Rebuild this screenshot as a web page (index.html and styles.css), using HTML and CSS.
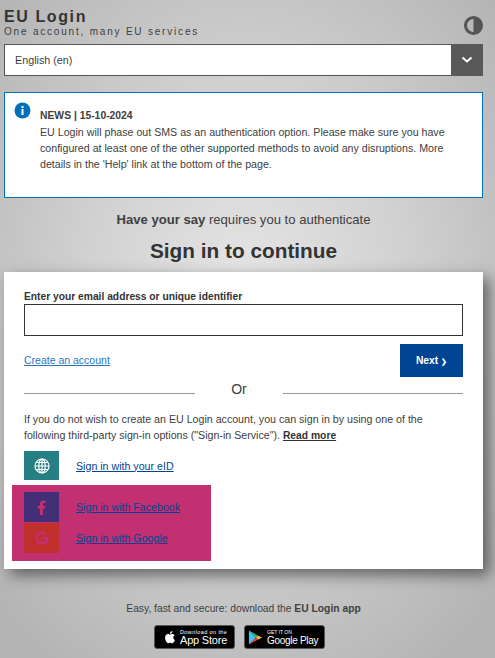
FILE: index.html
```html
<!DOCTYPE html>
<html lang="en">
<head>
  <meta charset="UTF-8" />
  <meta name="viewport" content="width=device-width, initial-scale=1.0"/>
  <title>EU Login</title>
  <link rel="stylesheet" href="styles.css">
</head>
<body>

  <div class="header">
    <div class="brand">
      <div class="brand-name">EU Login</div>
      <div class="brand-sub">One account, many EU services</div>
    </div>
    <svg class="contrast" width="19" height="19" viewBox="0 0 19 19">
      <circle cx="9.500" cy="9.500" r="8" fill="none" stroke="#555" stroke-width="3"/>
      <path d="M9.500 1.500a8 8 0 0 1 0 16z" fill="#555"/>
    </svg>
  </div>

  <div class="lang">
    <div class="lang-value">English (en)</div>
    <div class="lang-arrow">
      <svg width="12" height="8" viewBox="0 0 12 8">
        <path d="M1.500 1.500 6 5.500l4.500-4" fill="none" stroke="#fff" stroke-width="2"/>
      </svg>
    </div>
  </div>

  <div class="news">
    <svg class="news-icon" width="17" height="17" viewBox="0 0 17 17">
      <circle cx="8.500" cy="8.500" r="8" fill="#0070b8"/>
      <rect x="7.500" y="4" width="2" height="2" fill="#fff"/>
      <rect x="7.500" y="7" width="2" height="6" fill="#fff"/>
    </svg>
    <div class="news-text">
      <div class="news-title">NEWS | 15-10-2024</div>
      <div>EU Login will phase out SMS as an authentication option. Please make sure you have configured at least one of the other supported methods to avoid any disruptions. More details in the 'Help' link at the bottom of the page.</div>
    </div>
  </div>

  <div class="auth-note"><b>Have your say</b> requires you to authenticate</div>
  <h1 class="title">Sign in to continue</h1>

  <div class="card">
    <label class="field-label" for="email">Enter your email address or unique identifier</label>
    <input class="field" id="email" type="text">

    <div class="actions">
      <a class="create-link" href="#">Create an account</a>
      <button class="next">Next <span class="next-arrow">&#x276F;</span></button>
    </div>

    <div class="or"><span class="or-line or-left"></span><span class="or-text">Or</span><span class="or-line"></span></div>

    <p class="intro">If you do not wish to create an EU Login account, you can sign in by using one of the following third-party sign-in options ("Sign-in Service"). <a class="read-more" href="#">Read more</a></p>

    <div class="service service-eid">
      <span class="service-icon icon-eid">
        <svg width="16" height="16" viewBox="0 0 16 16" fill="none" stroke="#fff" stroke-width="1.200">
          <circle cx="8" cy="8" r="7"/>
          <ellipse cx="8" cy="8" rx="3.200" ry="7"/>
          <path d="M8 1v14M1 8h14M2 4.500h12M2 11.500h12"/>
        </svg>
      </span>
      <a class="service-link" href="#">Sign in with your eID</a>
    </div>

    <div class="highlight">
      <div class="service">
        <span class="service-icon icon-fb">
          <svg width="9" height="15" viewBox="0 0 9 15">
            <path d="M3 15V8.500H.8V6H3V4.200C3 1.700 4.400.5 6.500.5c.9 0 1.700.1 2 .1v2.300H7.200C6.100 2.900 5.900 3.400 5.900 4.200V6h2.500l-.4 2.500H5.900V15z" fill="#c23071"/>
          </svg>
        </span>
        <a class="service-link" href="#">Sign in with Facebook</a>
      </div>
      <div class="service">
        <span class="service-icon icon-google">
          <svg width="14" height="14" viewBox="0 0 14 14">
            <path d="M7 5.700h6.700c.1.400.1.800.1 1.300 0 4-2.700 6.800-6.800 6.800A6.800 6.800 0 1 1 7 .2c1.800 0 3.400.7 4.600 1.800L9.700 3.800C9 3.200 8.100 2.800 7 2.800 4.700 2.800 2.900 4.700 2.900 7s1.800 4.200 4.100 4.200c2 0 3.400-1.100 3.800-3H7z" fill="#c23071"/>
          </svg>
        </span>
        <a class="service-link" href="#">Sign in with Google</a>
      </div>
    </div>
  </div>

  <div class="footer">
    <div class="footer-text">Easy, fast and secure: download the <b>EU Login app</b></div>
    <div class="badges">
      <a class="badge" href="#">
        <svg width="14" height="16" viewBox="0 0 14 16">
          <path d="M11.300 8.500c0-1.500 1.200-2.200 1.300-2.300-.7-1-1.800-1.200-2.200-1.200-.9-.1-1.800.6-2.300.6s-1.200-.6-2-.5c-1 0-2 .6-2.500 1.500C2.500 8.500 3.300 11.300 4.300 12.800c.5.700 1.100 1.500 1.900 1.500s1-.5 2-.5 1.200.5 2 .5 1.400-.7 1.900-1.500c.6-.9.800-1.700.9-1.700-.1 0-1.700-.7-1.700-2.600zM9.800 3.900c.4-.5.700-1.200.6-1.900-.6 0-1.300.4-1.800.9-.4.500-.7 1.200-.6 1.800.7.100 1.400-.3 1.800-.8z" fill="#fff"/>
        </svg>
        <span class="badge-text"><span class="badge-small">Download on the</span><span class="badge-big">App Store</span></span>
      </a>
      <a class="badge badge-google" href="#">
        <svg width="15" height="17" viewBox="0 0 16 17">
          <path d="M1 1v15l7.500-7.500z" fill="#3bc4f0"/>
          <path d="M1 1l10 5.500-2.500 2z" fill="#35b36b"/>
          <path d="M1 16l10-5.500-2.500-2z" fill="#e8423f"/>
          <path d="M11 6.500l4 2-4 2-2.500-2z" fill="#fbc02d"/>
        </svg>
        <span class="badge-text"><span class="badge-small badge-caps">GET IT ON</span><span class="badge-big badge-play">Google Play</span></span>
      </a>
    </div>
  </div>

</body>
</html>
```

FILE: styles.css
```css
html {
  background-color: #b8b8b8;
}

body {
  margin: 0;
  height: 658px;
  overflow: hidden;
  box-sizing: border-box;
  padding: 7px 12px 0 4px;
  color: #404040;
  font-family: "Liberation Sans", Arial, sans-serif;
  font-size: 10.650px;
  background: radial-gradient(ellipse 340px 440px at 245px 300px, #e6e6e6 0%, #d0d0d0 50%, #b4b4b4 100%);
}

.header {
  display: flex;
  justify-content: space-between;
  align-items: flex-end;
  height: 31px;
}

.brand-name {
  font-size: 16px;
  font-weight: bold;
  letter-spacing: 1.600px;
  line-height: 17px;
  color: #333;
}

.brand-sub {
  font-size: 10px;
  letter-spacing: 1.800px;
  line-height: 13px;
}

.contrast {
  display: block;
  margin-bottom: 3px;
}

.lang {
  display: flex;
  height: 32px;
  margin-top: 6px;
  box-sizing: border-box;
  border: 1px solid #555;
  background-color: white;
}

.lang-value {
  flex: 1;
  padding-left: 10px;
  line-height: 30px;
  font-size: 10.750px;
}

.lang-arrow {
  display: flex;
  align-items: center;
  justify-content: center;
  width: 32px;
  margin: -1px;
  background-color: #595959;
}

.news {
  display: flex;
  height: 106px;
  margin-top: 16px;
  box-sizing: border-box;
  border: 1px solid #0070b8;
  background-color: white;
  padding: 9px 9px;
}

.news-icon {
  flex: none;
  display: block;
}

.news-text {
  margin-left: 9px;
  padding-top: 6px;
  line-height: 16px;
}

.news-title {
  font-weight: bold;
  font-size: 10.350px;
}

.auth-note {
  margin-top: 13px;
  text-align: center;
  font-size: 13.100px;
  line-height: 18px;
}

.title {
  margin: 10px 0 0;
  text-align: center;
  font-size: 20.800px;
  line-height: 24px;
  color: #333;
}

.card {
  height: 297px;
  margin-top: 9px;
  box-sizing: border-box;
  padding: 18px 20px 0;
  background-color: white;
  box-shadow: 6px 6px 14px rgba(0, 0, 0, 0.5);
}

.field-label {
  display: block;
  font-weight: bold;
  font-size: 10.250px;
  line-height: 14px;
  color: #333;
}

.field {
  display: block;
  width: 100%;
  height: 32px;
  box-sizing: border-box;
  border: 1px solid #333;
  background-color: white;
}

.actions {
  display: flex;
  justify-content: space-between;
  align-items: center;
  margin-top: 8px;
}

.create-link {
  margin-top: -2px;
  color: #2c75b8;
  font-size: 10.500px;
}

.next {
  width: 63px;
  height: 33px;
  border: none;
  padding: 0;
  background-color: #004494;
  color: white;
  font-family: inherit;
  font-weight: bold;
  font-size: 10.300px;
}

.next-arrow {
  font-size: 7px;
}

.or {
  display: flex;
  align-items: flex-end;
  height: 20px;
  margin-top: 2px;
}

.or-line {
  flex: 1;
  border-bottom: 1px solid #999;
  margin-bottom: 5px;
}

.or-left {
  flex: none;
  width: 171px;
}

.or-text {
  width: 88px;
  text-align: center;
  font-size: 14px;
  line-height: 20px;
}

.intro {
  margin: 12px 0 0;
  line-height: 16px;
}

.read-more {
  color: #333;
  font-weight: bold;
  font-size: 10.300px;
}

.service {
  display: flex;
  align-items: center;
  height: 30px;
  margin-bottom: 1px;
}

.service-eid {
  height: 29px;
  margin-top: 7px;
}

.service-icon {
  display: flex;
  align-items: center;
  justify-content: center;
  flex: none;
  width: 35px;
  height: 100%;
}

.icon-eid {
  background-color: #268083;
}

.icon-fb {
  background-color: #432f78;
}

.icon-google {
  background-color: #c02f2c;
}

.service-link {
  margin-left: 17px;
  color: #004494;
  white-space: nowrap;
}

.highlight {
  width: 175px;
  height: 69px;
  margin: 5px 0 0 -12px;
  padding: 7px 12px 0;
  background-color: #c23071;
}

.footer {
  margin-top: 34px;
  text-align: center;
}

.footer-text {
  font-size: 10.300px;
  line-height: 12px;
}

.badges {
  display: flex;
  justify-content: center;
  gap: 9px;
  margin: 10px 8px 0 0;
}

.badge {
  display: flex;
  align-items: center;
  gap: 4px;
  width: 81px;
  height: 24px;
  box-sizing: border-box;
  padding-left: 7px;
  border: 1px solid #555;
  border-radius: 3px;
  background-color: black;
  color: white;
  text-decoration: none;
  text-align: left;
  white-space: nowrap;
}

.badge-google {
  padding-left: 3px;
}

.badge-text {
  display: flex;
  flex-direction: column;
}

.badge-small {
  font-size: 5.500px;
  letter-spacing: 0.400px;
  line-height: 6px;
}

.badge-caps {
  font-size: 5px;
  letter-spacing: 0;
}

.badge-big {
  font-size: 11px;
  line-height: 11px;
  letter-spacing: -0.200px;
}

.badge-play {
  font-size: 10px;
  letter-spacing: -0.300px;
}
```
